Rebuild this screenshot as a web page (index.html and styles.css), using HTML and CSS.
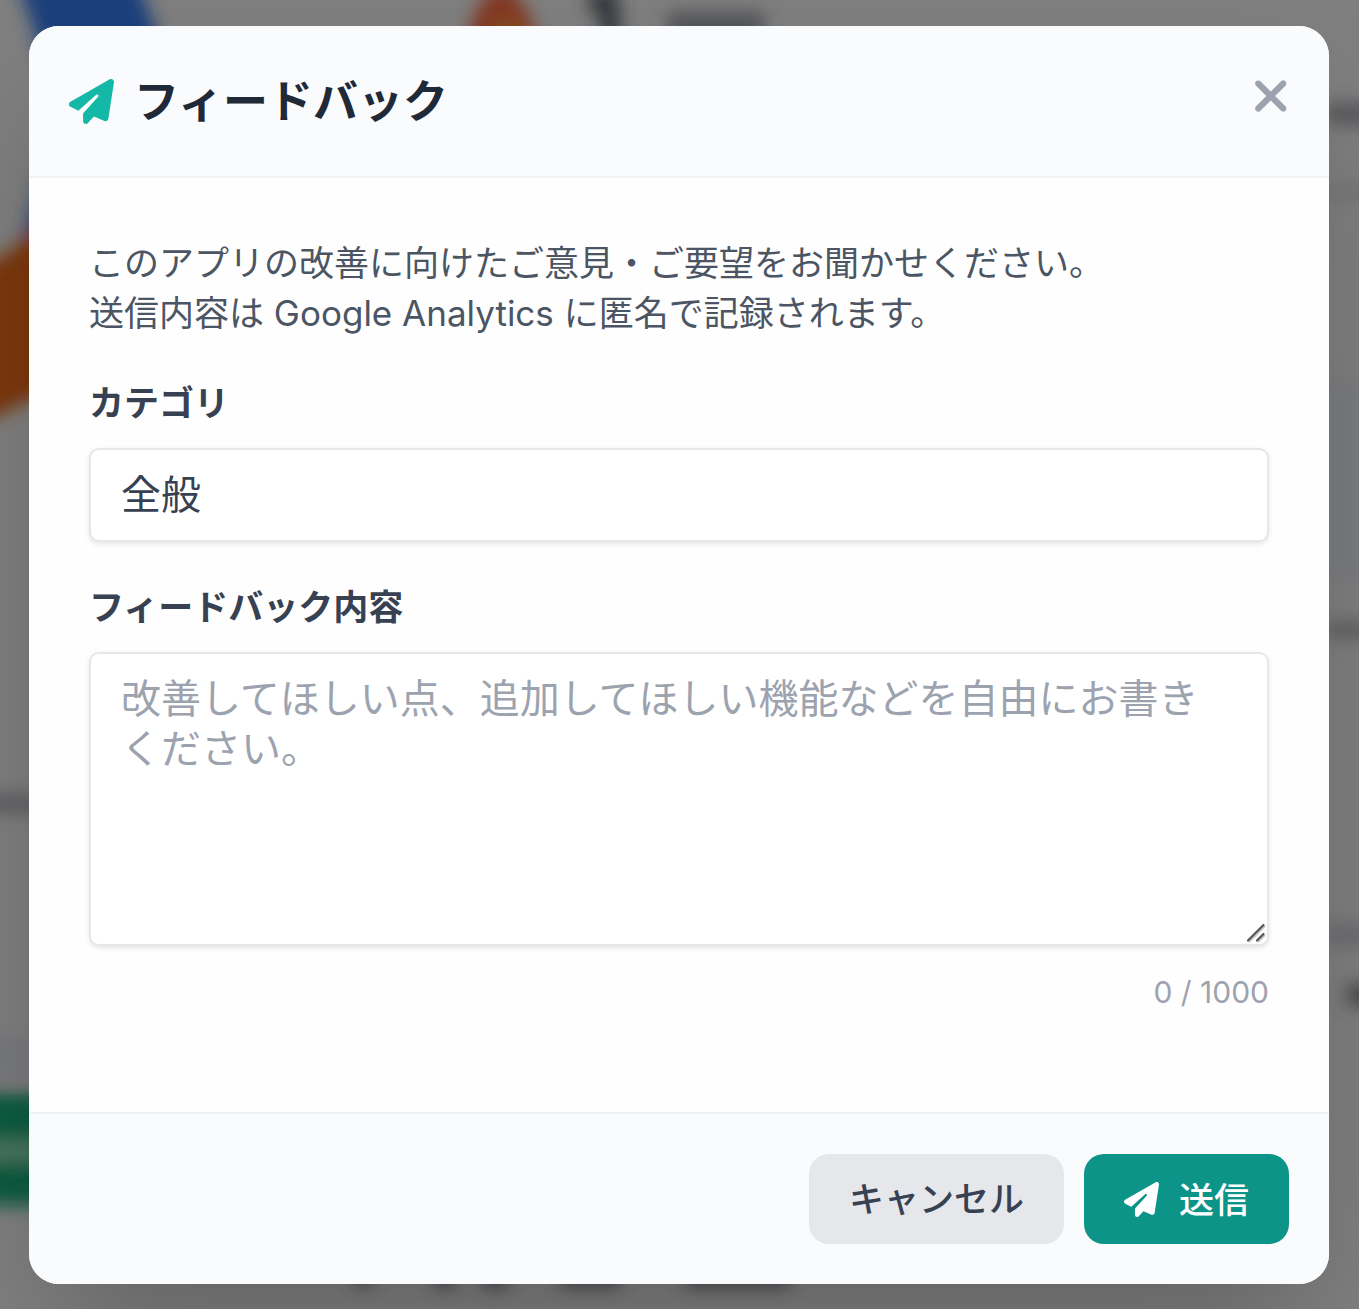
FILE: index.html
```html
<!DOCTYPE html>
<html lang="ja">
<head>
    <meta charset="UTF-8">
    <meta name="viewport" content="width=device-width, initial-scale=1.0">
    <title>フィードバック</title>
    <link rel="stylesheet" href="styles.css">
</head>
<body>
    <!-- 背面のダッシュボード（ぼかし） -->
    <svg class="backdrop" viewBox="0 0 1359 1309" aria-hidden="true">
        <defs>
            <filter id="blur" x="-20%" y="-20%" width="140%" height="140%">
                <feGaussianBlur stdDeviation="8.5"/>
            </filter>
        </defs>
        <rect width="1359" height="1309" fill="#7f7f7f"/>
        <g filter="url(#blur)">
            <path d="M14 -30H134L166 60L80 200L20 250L60 120L34 30Z" fill="#1d407c"/>
            <path d="M-40 268Q8 264 32 228H80V385Q40 390 -40 436Z" fill="#7c390c"/>
            <path d="M500 -18Q468 8 468 50H537Q535 5 500 -18Z" fill="#843823"/>
            <path d="M492 24H522V60H492Z" fill="#85561a"/>
            <path d="M588 -10H618L622 50H602L600 16L590 12Z" fill="#36383e"/>
            <path d="M668 12H764V44H668Z" fill="#535458"/>
            <rect x="1326" y="104" width="60" height="20" fill="#555658"/>
            <rect x="1326" y="186" width="60" height="12" fill="#727376"/>
            <rect x="1326" y="378" width="60" height="205" fill="#7a7c7e"/>
            <rect x="1326" y="622" width="60" height="16" fill="#5d5e60"/>
            <rect x="1326" y="924" width="60" height="22" fill="#6b6c6f"/>
            <rect x="1347" y="984" width="40" height="22" fill="#48494b"/>
            <rect x="-30" y="795" width="80" height="17" fill="#5c5c60"/>
            <rect x="-30" y="1038" width="80" height="40" fill="#78797d"/>
            <rect x="-30" y="1093" width="90" height="112" fill="#085b42"/>
            <rect x="-30" y="1140" width="80" height="22" fill="#48785f"/>
            <path d="M355 1270H372V1286H355ZM435 1270H455V1288H435ZM482 1270H508V1288H482ZM560 1270H620V1287H560ZM685 1270H790V1287H685Z" fill="#444549"/>
        </g>
    </svg>

    <div class="overlay">
        <div class="modal" role="dialog">
            <div class="modal-header">
                <h2 class="modal-title">
                    <svg class="icon-plane" viewBox="0 0 512 512"><path d="M498.1 5.6c10.1 7 15.4 19.1 13.5 31.2l-64 416c-1.5 9.7-7.4 18.2-16 23s-18.9 5.4-28 1.6L284 427.7l-68.5 74.1c-8.9 9.7-22.9 12.9-35.2 8.1S160 493.2 160 480V396.4c0-4 1.5-7.8 4.2-10.7L331.8 202.8c5.8-6.3 5.6-16-.4-22s-15.7-6.4-22-.7L106 360.8 17.7 316.6C7.1 311.3 .3 300.7 0 288.9s5.9-22.8 16.1-28.7l448-256c10.7-6.1 23.9-5.5 34 1.4z"/></svg>
                    <span class="modal-title-text">フィードバック</span>
                </h2>
                <button type="button" class="close" aria-label="閉じる">
                    <svg class="icon-close" viewBox="0 0 384 512"><path d="M342.6 150.6c12.5-12.5 12.5-32.8 0-45.3s-32.8-12.5-45.3 0L192 210.7 86.6 105.4c-12.5-12.5-32.8-12.5-45.3 0s-12.5 32.8 0 45.3L146.7 256 41.4 361.4c-12.5 12.5-12.5 32.8 0 45.3s32.8 12.5 45.3 0L192 301.3 297.4 406.6c12.5 12.5 32.8 12.5 45.3 0s12.5-32.8 0-45.3L237.3 256 342.6 150.6z"/></svg>
                </button>
            </div>

            <div class="modal-body">
                <p class="lead">このアプリの改善に向けたご意見・ご要望をお聞かせください。<br>送信内容は Google Analytics に匿名で記録されます。</p>

                <label class="label" for="category">カテゴリ</label>
                <select class="field select" id="category">
                    <option>全般</option>
                </select>

                <label class="label" for="content">フィードバック内容</label>
                <div class="textarea-wrap">
                    <textarea class="field textarea" id="content" maxlength="1000" placeholder="改善してほしい点、追加してほしい機能などを自由にお書きください。"></textarea>
                    <svg class="grip" viewBox="0 0 20 20"><path class="grip-light" d="M3.5 18.5L18.5 3.5M12.5 18.5L18.5 12.5"/><path class="grip-dark" d="M2 17.5L17.5 2M11 17.5L17.5 11"/></svg>
                </div>
                <p class="counter">0 / 1000</p>
            </div>

            <div class="modal-footer">
                <button type="button" class="btn btn-cancel">キャンセル</button>
                <button type="button" class="btn btn-send">
                    <svg class="icon-send" viewBox="0 0 512 512"><path d="M498.1 5.6c10.1 7 15.4 19.1 13.5 31.2l-64 416c-1.5 9.7-7.4 18.2-16 23s-18.9 5.4-28 1.6L284 427.7l-68.5 74.1c-8.9 9.7-22.9 12.9-35.2 8.1S160 493.2 160 480V396.4c0-4 1.5-7.8 4.2-10.7L331.8 202.8c5.8-6.3 5.6-16-.4-22s-15.7-6.4-22-.7L106 360.8 17.7 316.6C7.1 311.3 .3 300.7 0 288.9s5.9-22.8 16.1-28.7l448-256c10.7-6.1 23.9-5.5 34 1.4z"/></svg>
                    <span class="btn-text">送信</span>
                </button>
            </div>
        </div>
    </div>
</body>
</html>
```
FILE: styles.css
```css
*{
    box-sizing: border-box;
    margin: 0;
    padding: 0;
}
body{
    height: 1309px;
    overflow: hidden;
    background: #7f7f7f;
    font-family: Inter, "Noto Sans CJK JP", sans-serif;
    color: #374151;
}
button, select, textarea{
    font-family: inherit;
    border: none;
}
.backdrop{
    position: absolute;
    top: 0;
    left: 0;
    width: 1359px;
    height: 1309px;
}

/* モーダル */
.overlay{
    position: relative;
    padding: 26px 30px 25px 29px;
}
.modal{
    display: flex;
    flex-direction: column;
    height: 1258px;
    border-radius: 30px;
    background: #fefefe;
    overflow: hidden;
    box-shadow: 0 62px 125px -30px rgba(0,0,0,.25);
}
.modal-header{
    display: flex;
    justify-content: space-between;
    align-items: flex-start;
    height: 152px;
    padding: 40px;
    background: #fafbfd;
    border-bottom: 2px solid #f1f2f4;
}
.modal-title{
    display: flex;
    align-items: center;
    gap: 20px;
    height: 70px;
    font-size: 45px;
    font-weight: 700;
    line-height: 70px;
    color: #1f2937;
}
.modal-title-text{
    padding-top: 2px;
}
.icon-plane{
    width: 45px;
    height: 45px;
    fill: #14b8a6;
}
.close{
    padding-top: 5px;
    background: none;
}
.icon-close{
    display: block;
    width: 37.5px;
    height: 50px;
    fill: #9ca3af;
}

/* 入力フォーム */
.modal-body{
    flex: 1;
    padding: 60px;
}
.lead{
    margin-bottom: 40px;
    font-size: 35px;
    line-height: 50px;
    color: #4b5563;
}
.label{
    display: block;
    margin-bottom: 20px;
    font-size: 35px;
    font-weight: 600;
    line-height: 50px;
}
.field{
    display: block;
    width: 100%;
    padding: 20px 30px;
    border: 2px solid #e5e7eb;
    border-radius: 10px;
    background: #fff;
    font-size: 40px;
    line-height: 50px;
    color: #374151;
    box-shadow: 0 2px 5px rgba(0,0,0,.1);
}
.select{
    appearance: none;
    height: 94px;
    margin-bottom: 40px;
}
.textarea-wrap{
    position: relative;
}
.textarea{
    height: 294px;
    resize: none;
}
.textarea::placeholder{
    color: #9ca3af;
}
.grip{
    position: absolute;
    right: 3px;
    bottom: 3px;
    width: 20px;
    height: 20px;
    fill: none;
    stroke-width: 2.2;
    stroke-linecap: round;
}
.grip-dark{
    stroke: #555;
}
.grip-light{
    stroke: #ccc;
}
.counter{
    margin-top: 26px;
    font-size: 30px;
    line-height: 40px;
    text-align: right;
    color: #9ca3af;
}

/* フッター */
.modal-footer{
    display: flex;
    justify-content: flex-end;
    gap: 20px;
    height: 172px;
    padding: 40px;
    background: #fafbfd;
    border-top: 2px solid #f1f2f4;
}
.btn{
    display: flex;
    align-items: center;
    justify-content: center;
    gap: 20px;
    height: 90px;
    border-radius: 20px;
    font-size: 35px;
    font-weight: 500;
    line-height: 50px;
}
.btn-cancel{
    width: 255px;
    background: #e5e7eb;
    color: #374151;
}
.btn-send{
    width: 205px;
    background: #0d9488;
    color: #fff;
}
.btn-text{
    padding-top: 1px;
}
.icon-send{
    width: 35px;
    height: 35px;
    fill: #fff;
}
```
